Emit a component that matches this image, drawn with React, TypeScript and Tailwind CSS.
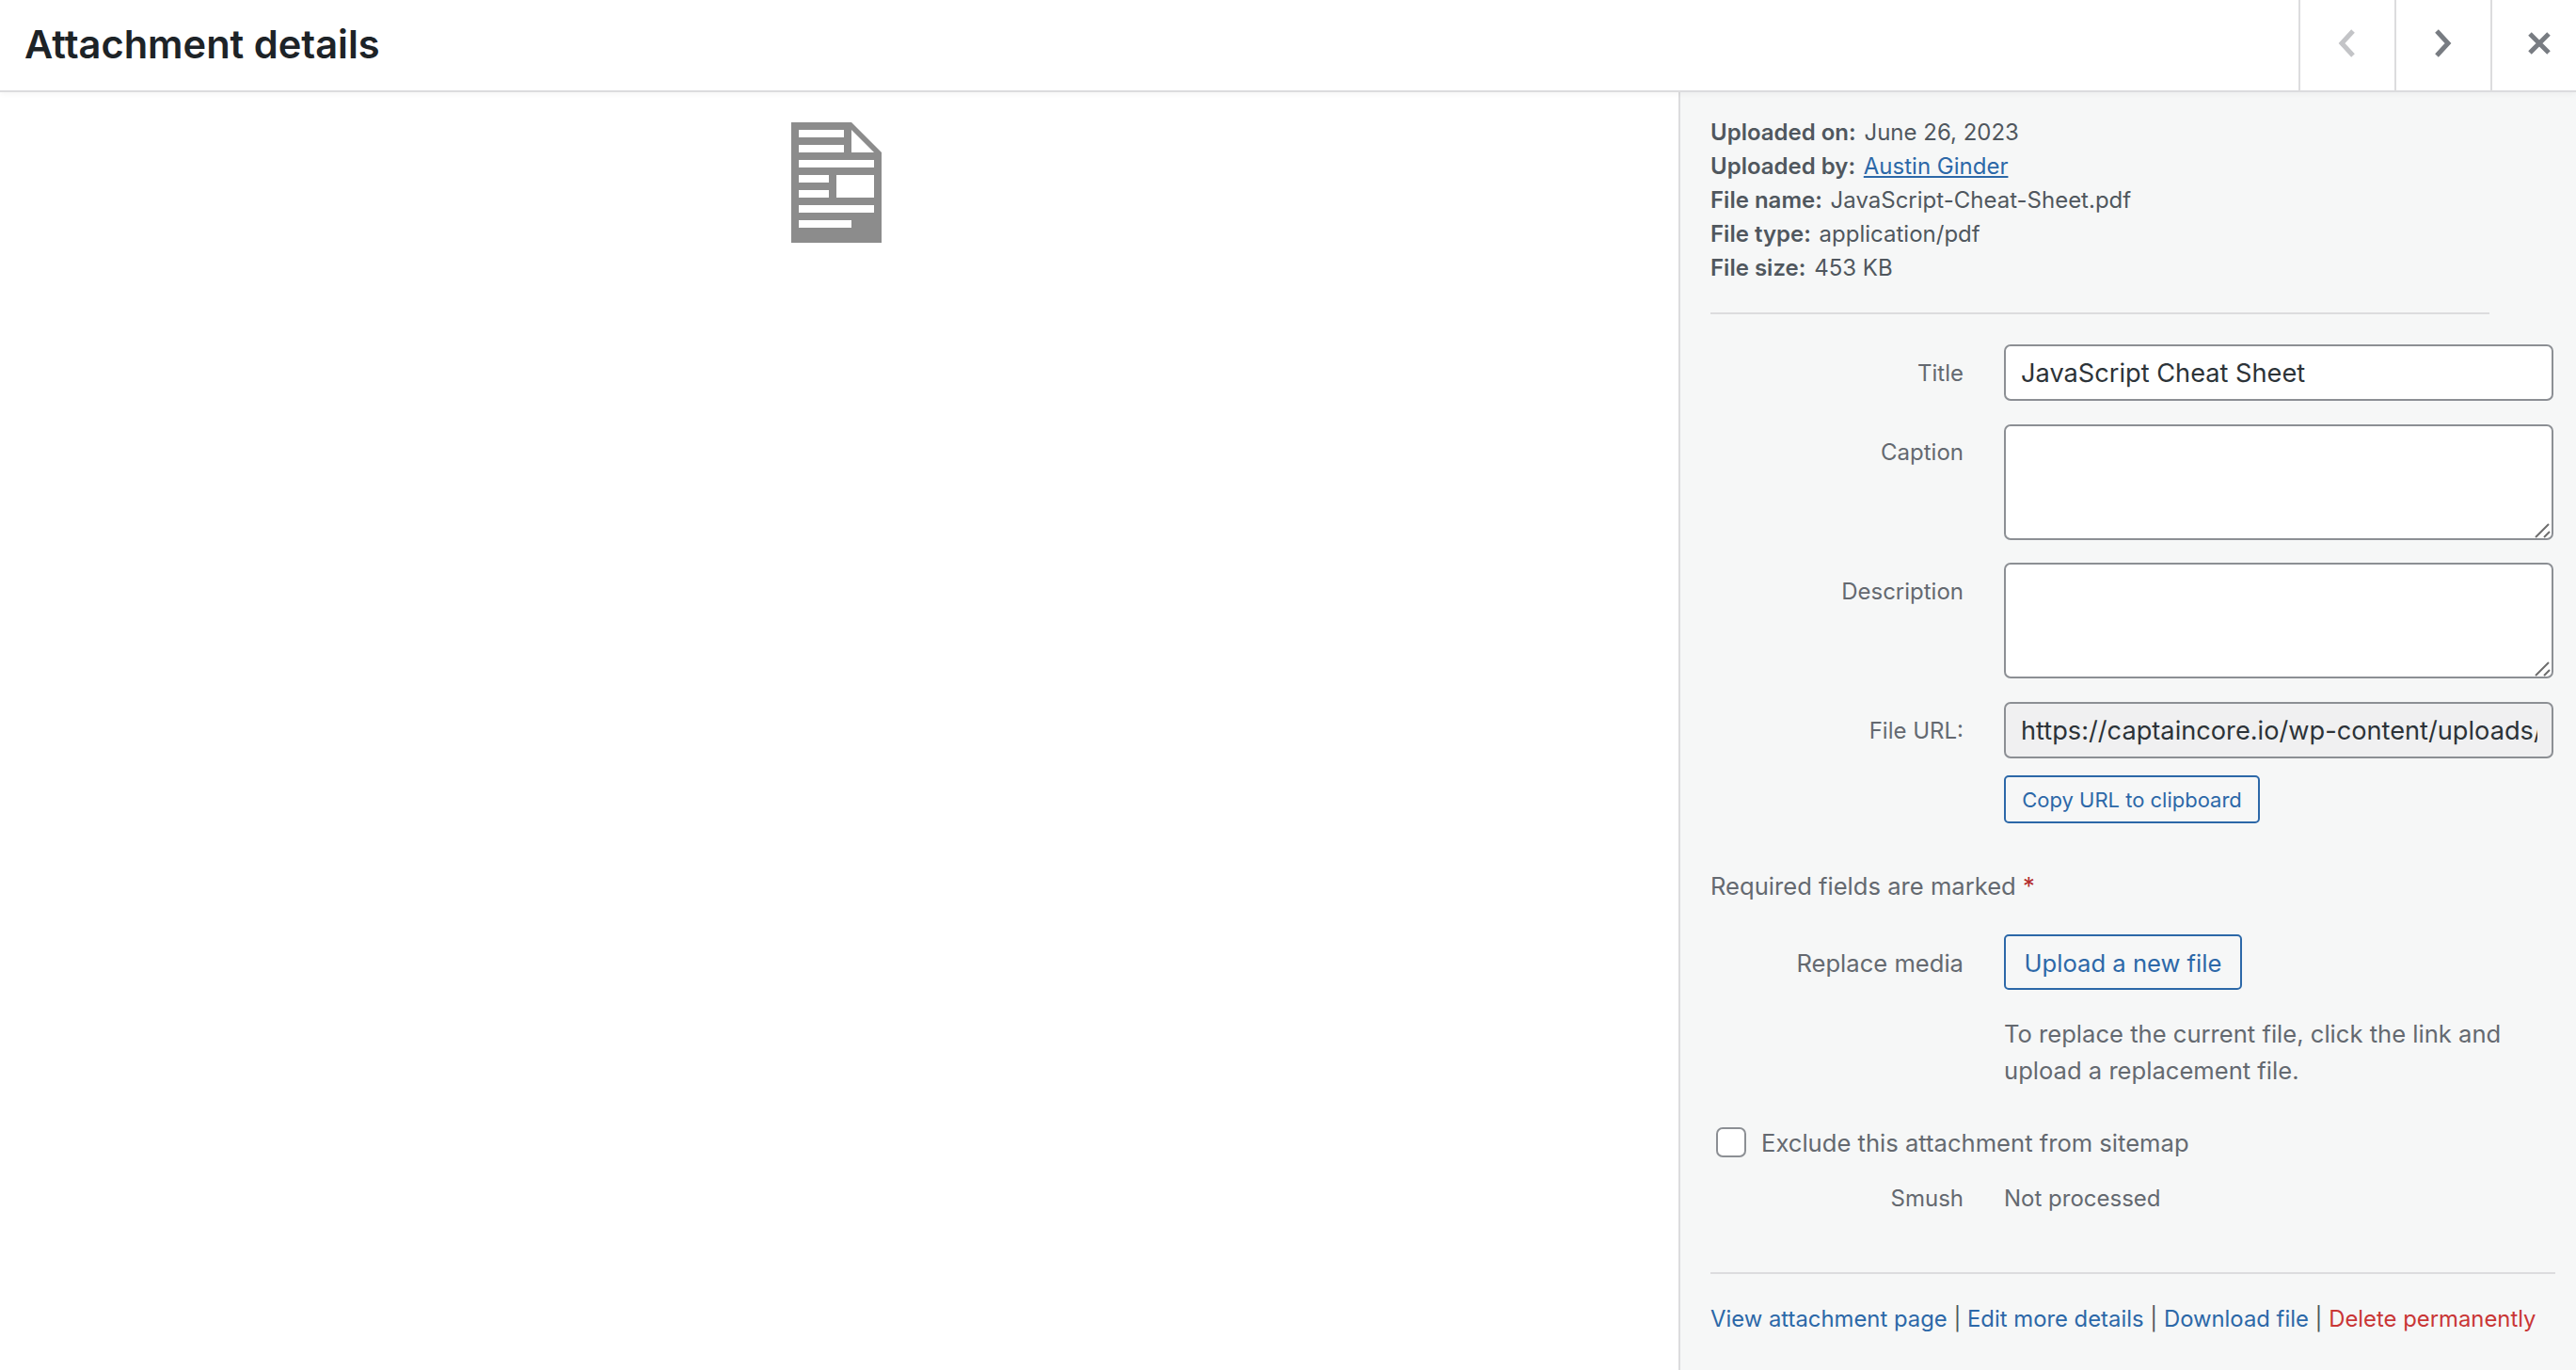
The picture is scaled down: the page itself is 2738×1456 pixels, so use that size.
const font = { fontFamily: "Inter, 'Noto Sans', sans-serif" };

function NavButton({ children }: { children: React.ReactNode }) {
  return (
    <div className="w-[102px] h-full border-l-2 border-[#dcdcde] flex items-center justify-center pb-[4px]">
      {children}
    </div>
  );
}

function DocIcon() {
  return (
    <svg width="96" height="128" viewBox="0 0 96 128" className="block">
      <path d="M0 0H64L96 32V128H0Z" fill="#8c8c8c" />
      <g fill="#ffffff">
        <rect x="8" y="8" width="48" height="8" />
        <rect x="8" y="24" width="48" height="8" />
        <rect x="8" y="40" width="80" height="8" />
        <rect x="8" y="56" width="32" height="8" />
        <rect x="48" y="56" width="40" height="24" />
        <rect x="8" y="72" width="32" height="8" />
        <rect x="8" y="88" width="80" height="8" />
        <rect x="8" y="104" width="56" height="8" />
        <path d="M64 8V32H88Z" />
      </g>
    </svg>
  );
}

function Meta({ label, children }: { label: string; children: React.ReactNode }) {
  return (
    <div className="h-[36px] leading-[36px]">
      <span className="font-semibold mr-[2px]">{label}</span> {children}
    </div>
  );
}

function Label({ children, className = "" }: { children: React.ReactNode; className?: string }) {
  return <div className={`w-[269px] shrink-0 text-right text-[#646970] ${className}`}>{children}</div>;
}

function Area() {
  return (
    <div className="relative ml-[43px] w-[584px] h-[123px]">
      <textarea
        readOnly
        className="w-full h-full border-2 border-[#8c8f94] rounded-[7px] bg-white outline-none block resize-none"
      />
      <svg width="22" height="22" viewBox="0 0 22 22" className="absolute right-0 bottom-0">
        <path d="M3 19L17 5M12 19L18 13" fill="none" stroke="#6e6e6e" strokeWidth="2" />
      </svg>
    </div>
  );
}

export default function App() {
  return (
    <div style={font} className="w-[2738px] h-[1456px] bg-white flex flex-col overflow-hidden">
      <header className="relative z-10 h-[98px] shrink-0 border-b-2 border-[#dcdcde] bg-white flex justify-between shadow-[0_2px_6px_rgba(0,0,0,0.04)]">
        <h1 className="pl-[26px] text-[41.6px] leading-[94px] font-semibold text-[#1d2327]">Attachment details</h1>
        <div className="flex h-full">
          <NavButton>
            <svg width="24" height="32" viewBox="0 0 24 32">
              <path d="M18 3L6 16L18 29" fill="none" stroke="#c3c4c7" strokeWidth="5" />
            </svg>
          </NavButton>
          <NavButton>
            <svg width="24" height="32" viewBox="0 0 24 32" className="mr-[2px]">
              <path d="M6 3L18 16L6 29" fill="none" stroke="#787c82" strokeWidth="5" />
            </svg>
          </NavButton>
          <div className="w-[91px] h-full border-l-2 border-[#dcdcde] flex items-center justify-center pb-[4px] pl-[10px]">
            <svg width="26" height="26" viewBox="0 0 26 26">
              <path d="M3 3L23 23M23 3L3 23" fill="none" stroke="#787c82" strokeWidth="5" />
            </svg>
          </div>
        </div>
      </header>
      <main className="flex flex-1 min-h-0">
        <div className="flex-1 flex justify-center pt-[32px] pr-[6px]">
          <DocIcon />
        </div>
        <aside className="w-[954px] shrink-0 border-l-2 border-[#dcdcde] bg-[#f6f7f7] pl-[32px] pr-[22px] text-[24px] text-[#50575e]">
          <div className="pt-[25px] pb-[29px] w-[828px] border-b-2 border-[#dcdcde]">
            <Meta label="Uploaded on:">June 26, 2023</Meta>
            <Meta label="Uploaded by:">
              <a className="text-[#2c68a8] underline">Austin Ginder</a>
            </Meta>
            <Meta label="File name:">JavaScript-Cheat-Sheet.pdf</Meta>
            <Meta label="File type:">application/pdf</Meta>
            <Meta label="File size:">453 KB</Meta>
          </div>
          <div className="flex mt-[32px] items-center h-[60px]">
            <Label className="pt-[1px]">Title</Label>
            <input
              readOnly
              value="JavaScript Cheat Sheet"
              className="ml-[43px] w-[584px] h-[60px] border-2 border-[#8c8f94] rounded-[7px] bg-white pl-[16px] pr-[15px] pt-[1px] text-[27.2px] text-[#2c3338] outline-none"
            />
          </div>
          <div className="flex mt-[25px]">
            <Label className="pt-[12px]">Caption</Label>
            <Area />
          </div>
          <div className="flex mt-[24px]">
            <Label className="pt-[13px]">Description</Label>
            <Area />
          </div>
          <div className="flex mt-[25px] items-center h-[60px]">
            <Label className="pt-[1px]">File URL:</Label>
            <input
              readOnly
              value="https://captaincore.io/wp-content/uploads/2023/06/JavaScript-Cheat-Sheet.pdf"
              className="ml-[43px] w-[584px] h-[60px] border-2 border-[#8c8f94] rounded-[7px] bg-[#f0f0f1] pl-[16px] pr-[15px] pt-[1px] text-[27.2px] text-[#2c3338] outline-none"
            />
          </div>
          <div className="pl-[312px] mt-[18px] h-[51px]">
            <div className="flex items-center justify-center w-[272px] h-[51px] pt-[1px] border-2 border-[#2c68a8] rounded-[5px] text-[22px] text-[#2c68a8]">
              Copy URL to clipboard
            </div>
          </div>
          <div className="mt-[49px] h-[36px] leading-[36px] text-[25.6px] text-[#646970]">
            Required fields are marked <span className="text-[#b32d2e]">*</span>
          </div>
          <div className="flex items-center mt-[33px] h-[59px] text-[25.6px]">
            <Label className="pt-[3px]">Replace media</Label>
            <div className="ml-[43px] inline-flex items-center justify-center w-[253px] h-[59px] pt-[3px] border-2 border-[#2c68a8] rounded-[5px] text-[#2c68a8]">
              Upload a new file
            </div>
          </div>
          <p className="pl-[312px] pr-[2px] mt-[27px] text-[25.6px] leading-[39px] text-[#646970]">
            To replace the current file, click the link and upload a replacement file.
          </p>
          <div className="flex items-center mt-[41px] h-[32px] pl-[6px] text-[25.6px] text-[#646970]">
            <span className="w-[32px] h-[32px] border-2 border-[#8c8f94] rounded-[7px] bg-white shrink-0" />
            <span className="ml-[16px] pt-[2px]">Exclude this attachment from sitemap</span>
          </div>
          <div className="flex items-center mt-[25px] h-[36px] text-[#646970]">
            <Label className="pt-[1px]">Smush</Label>
            <div className="ml-[43px] pt-[1px]">Not processed</div>
          </div>
          <div className="mt-[61px] border-t-2 border-[#dcdcde] pt-[30px] h-[60px] leading-[36px] whitespace-nowrap text-[23.85px]">
            <a className="text-[#2c68a8]">View attachment page</a> | <a className="text-[#2c68a8]">Edit more details</a> |{" "}
            <a className="text-[#2c68a8]">Download file</a> | <a className="text-[#c93636]">Delete permanently</a>
          </div>
        </aside>
      </main>
    </div>
  );
}
